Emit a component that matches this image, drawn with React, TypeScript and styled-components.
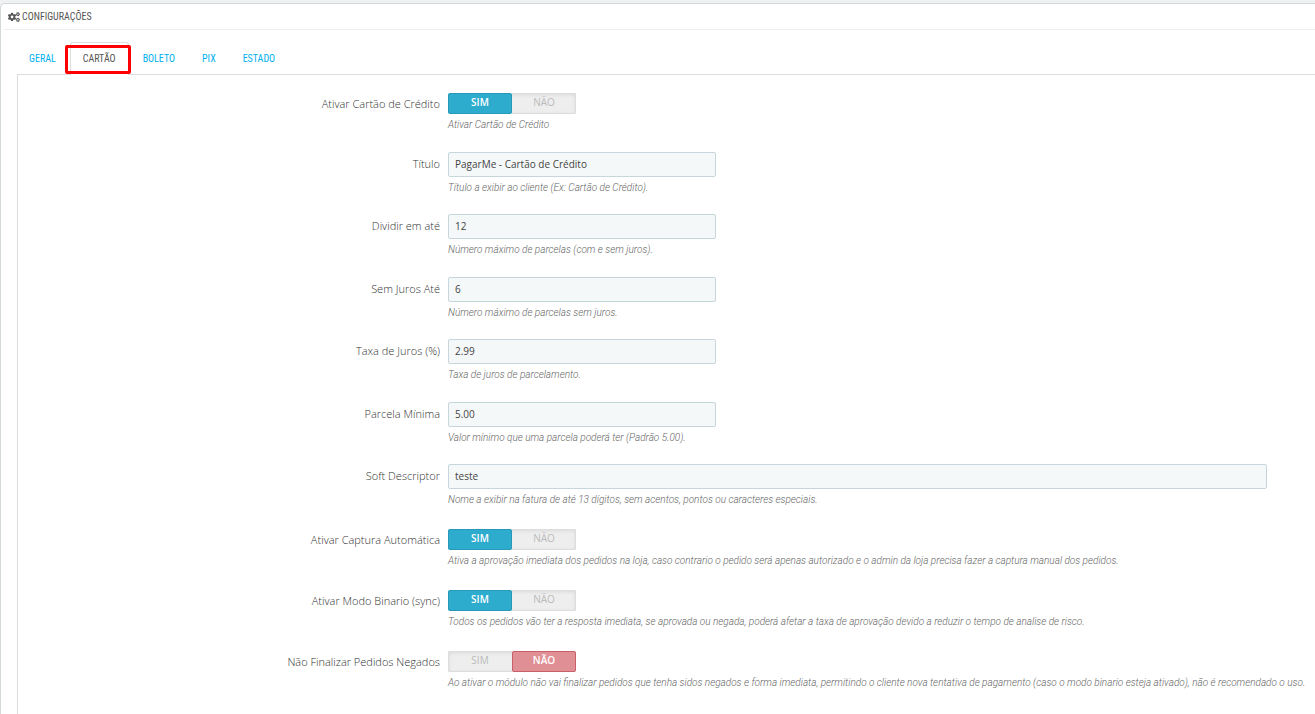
import React from "react";
import styled, { createGlobalStyle, css } from "styled-components";
import { FaCogs } from "react-icons/fa";

const GlobalStyle = createGlobalStyle`
  *, *::before, *::after { box-sizing: border-box; }
  body {
    margin: 0;
    background: #eff1f2;
    color: #555;
    font-family: "Open Sans", "Noto Sans", sans-serif;
    font-size: 11px;
    line-height: 16px;
  }
`;

const Page = styled.main`
  display: flex;
  flex-direction: column;
  min-height: 100vh;
  padding-top: 3px;
`;

const Panel = styled.section`
  display: flex;
  flex: 1;
  flex-direction: column;
  padding-left: 3px;
  background: #fff;
  border: 1px solid #d3d8db;
  border-right: 0;
  border-bottom: 0;
  border-radius: 5px 0 0 0;
`;

const Heading = styled.h1`
  display: flex;
  align-items: center;
  gap: 2px;
  height: 26px;
  margin: 0;
  padding-left: 4px;
  border-bottom: 1px solid #eee;
  font-family: "Roboto Condensed", "Liberation Sans Narrow", sans-serif;
  font-size: 10px;
  font-weight: 400;
  text-transform: uppercase;

  svg {
    width: 12px;
    height: 12px;
  }
`;

const Tabs = styled.nav`
  display: flex;
  gap: 1px;
  height: 44px;
  padding: 12px 0 0 12px;
`;

const Tab = styled.a<{ $active?: boolean }>`
  position: relative;
  z-index: 1;
  height: 33px;
  padding: 8px 12px 0;
  border: 1px solid transparent;
  border-radius: 3px 3px 0 0;
  color: #00aff0;
  font-family: "Roboto Condensed", "Liberation Sans Narrow", sans-serif;
  font-size: 10px;
  text-decoration: none;
  text-transform: uppercase;

  ${({ $active }) =>
    $active &&
    css`
      background: #fff;
      border-color: #ddd;
      border-bottom: 0;
      color: #555;
    `}
`;

const Highlight = styled.span`
  position: absolute;
  inset: 2px -3px 1px -6px;
  border: 3px solid #f00;
  border-radius: 2px;
`;

const Form = styled.form`
  flex: 1;
  margin-left: 13px;
  padding: 16px 7px 0 0;
  border: 1px solid #ddd;
  border-right: 0;
  border-bottom: 0;
`;

const Row = styled.div<{ $kind: "switch" | "text" }>`
  display: grid;
  grid-template-columns: 1fr 2fr;
  align-items: start;
  height: ${({ $kind }) => ($kind === "switch" ? 61 : 63)}px;
  padding-top: ${({ $kind }) => ($kind === "switch" ? 2 : 0)}px;

  &:nth-child(even) {
    height: ${({ $kind }) => ($kind === "switch" ? 61 : 62)}px;
  }
`;

const labelText = css<{ $kind: "switch" | "text" }>`
  padding: ${({ $kind }) => ($kind === "switch" ? 3 : 4)}px 8px 0 0;
  color: #333;
  font-weight: 300;
  text-align: right;
`;

const Label = styled.label<{ $kind: "switch" | "text" }>`
  ${labelText}
`;

const GroupLabel = styled.span<{ $kind: "switch" | "text" }>`
  ${labelText}
`;

const Field = styled.div`
  min-width: 0;
`;

const TextInput = styled.input<{ $wide?: boolean }>`
  display: block;
  width: ${({ $wide }) => ($wide ? "calc(100% - 41px)" : "268px")};
  height: 25px;
  padding: 0 6px 1px;
  background: #f5f8f9;
  border: 1px solid #c7d6db;
  border-radius: 2px;
  color: #444;
  font: inherit;
  font-size: 10px;
  outline: none;
`;

const Help = styled.p`
  margin: 3px 0 0;
  color: #666;
  font-family: Roboto, "Open Sans", sans-serif;
  font-size: 10px;
  font-style: italic;
  font-weight: 300;
  white-space: nowrap;
`;

const Switch = styled.div`
  display: flex;
  width: 128px;
  height: 21px;
  background: #eee;
  border-radius: 2px;
  box-shadow: inset 0 0 0 1px #ddd, inset 0 1px 4px #d0d0d0;
`;

const Option = styled.label<{ $tone: "yes" | "no" }>`
  flex: 1;
  border: 1px solid transparent;
  border-radius: 2px;
  color: #bbb;
  font-size: 10px;
  line-height: 17px;
  text-align: center;

  &:has(input:checked) {
    background: ${({ $tone }) => ($tone === "yes" ? "#2eacce" : "#e08f95")};
    border-color: ${({ $tone }) => ($tone === "yes" ? "#2899b8" : "#ca6067")};
    color: #fff;
    font-weight: 600;
  }

  input {
    position: absolute;
    width: 1px;
    height: 1px;
    margin: 0;
    opacity: 0;
    appearance: none;
  }
`;

type FieldData = {
  id: string;
  kind: "switch" | "text";
  label: string;
  value: string;
  help: string;
  wide?: boolean;
};

const fields: FieldData[] = [
  { id: "cartao", kind: "switch", label: "Ativar Cartão de Crédito", value: "sim", help: "Ativar Cartão de Crédito" },
  { id: "titulo", kind: "text", label: "Título", value: "PagarMe - Cartão de Crédito", help: "Título a exibir ao cliente (Ex: Cartão de Crédito)." },
  { id: "dividir", kind: "text", label: "Dividir em até", value: "12", help: "Número máximo de parcelas (com e sem juros)." },
  { id: "semjuros", kind: "text", label: "Sem Juros Até", value: "6", help: "Número máximo de parcelas sem juros." },
  { id: "taxa", kind: "text", label: "Taxa de Juros (%)", value: "2.99", help: "Taxa de juros de parcelamento." },
  { id: "minima", kind: "text", label: "Parcela Mínima", value: "5.00", help: "Valor mínimo que uma parcela poderá ter (Padrão 5.00)." },
  { id: "descriptor", kind: "text", label: "Soft Descriptor", value: "teste", wide: true, help: "Nome a exibir na fatura de até 13 dígitos, sem acentos, pontos ou caracteres especiais." },
  { id: "captura", kind: "switch", label: "Ativar Captura Automática", value: "sim", help: "Ativa a aprovação imediata dos pedidos na loja, caso contrario o pedido será apenas autorizado e o admin da loja precisa fazer a captura manual dos pedidos." },
  { id: "binario", kind: "switch", label: "Ativar Modo Binario (sync)", value: "sim", help: "Todos os pedidos vão ter a resposta imediata, se aprovada ou negada, poderá afetar a taxa de aprovação devido a reduzir o tempo de analise de risco." },
  { id: "negados", kind: "switch", label: "Não Finalizar Pedidos Negados", value: "nao", help: "Ao ativar o módulo não vai finalizar pedidos que tenha sidos negados e forma imediata, permitindo o cliente nova tentativa de pagamento (caso o modo binario esteja ativado), não é recomendado o uso." },
];

const tabs = ["Geral", "Cartão", "Boleto", "Pix", "Estado"];

function SwitchRow({ field }: { field: FieldData }) {
  return (
    <Row $kind="switch">
      <GroupLabel $kind="switch" id={`${field.id}-label`}>{field.label}</GroupLabel>
      <Field>
        <Switch role="radiogroup" aria-labelledby={`${field.id}-label`}>
          <Option $tone="yes">
            <input type="radio" name={field.id} value="sim" defaultChecked={field.value === "sim"} />
            SIM
          </Option>
          <Option $tone="no">
            <input type="radio" name={field.id} value="nao" defaultChecked={field.value === "nao"} />
            NÃO
          </Option>
        </Switch>
        <Help>{field.help}</Help>
      </Field>
    </Row>
  );
}

function TextRow({ field }: { field: FieldData }) {
  return (
    <Row $kind="text">
      <Label $kind="text" htmlFor={field.id}>{field.label}</Label>
      <Field>
        <TextInput id={field.id} type="text" defaultValue={field.value} $wide={field.wide} />
        <Help>{field.help}</Help>
      </Field>
    </Row>
  );
}

export default function App() {
  return (
    <Page>
      <GlobalStyle />
      <Panel>
        <Heading>
          <FaCogs aria-hidden="true" />
          Configurações
        </Heading>
        <Tabs>
          {tabs.map((name) => (
            <Tab key={name} href={`#${name.toLowerCase()}`} $active={name === "Cartão"}>
              {name}
              {name === "Cartão" && <Highlight />}
            </Tab>
          ))}
        </Tabs>
        <Form>
          {fields.map((field) =>
            field.kind === "switch" ? (
              <SwitchRow key={field.id} field={field} />
            ) : (
              <TextRow key={field.id} field={field} />
            )
          )}
        </Form>
      </Panel>
    </Page>
  );
}
